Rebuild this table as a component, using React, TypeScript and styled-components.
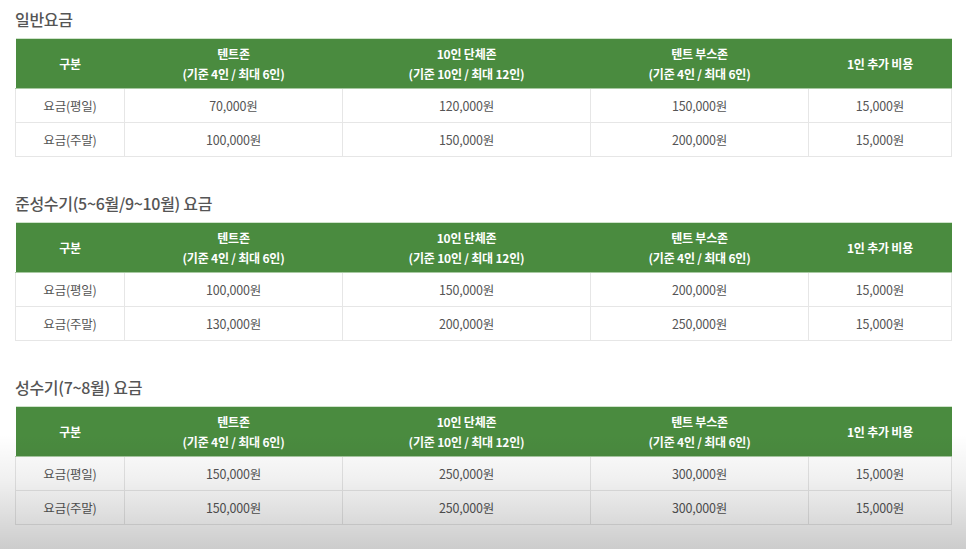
import styled, { createGlobalStyle } from "styled-components";

const GlobalStyle = createGlobalStyle`
  html, body {
    margin: 0;
    padding: 0;
    background: #ffffff;
  }
  body {
    font-family: "Noto Sans CJK KR", "Noto Sans", sans-serif;
  }
`;

const Page = styled.div`
  width: 966px;
  height: 549px;
  overflow: hidden;
  position: relative;
  padding: 8px 15px 0 15px;
  box-sizing: border-box;
`;

const Section = styled.section`
  margin-bottom: 35px;
`;

const Title = styled.h3`
  margin: 0 0 8px 0;
  font-size: 16px;
  font-weight: 500;
  line-height: 22px;
  color: #555;
  letter-spacing: -0.3px;
`;

const Table = styled.table`
  width: 936px;
  border-collapse: collapse;
  table-layout: fixed;
  font-size: 12.5px;
  border-top: 1px solid #cfe3cb;
`;

const Th = styled.th`
  background: #4a8b3f;
  color: #fff;
  font-weight: 700;
  font-size: 12px;
  height: 49px;
  padding: 0;
  line-height: 20px;
  text-align: center;
  letter-spacing: -0.2px;
  border-bottom: 1px solid #a8c9a2;
`;

const Td = styled.td`
  height: 33px;
  padding: 0;
  text-align: center;
  color: #555;
  border: 1px solid #e6e6e6;
  letter-spacing: -0.2px;
`;

const Shade = styled.div`
  position: absolute;
  left: 0;
  right: 0;
  bottom: 0;
  height: 115px;
  pointer-events: none;
  background: linear-gradient(
    to bottom,
    rgba(0, 0, 0, 0) 0%,
    rgba(0, 0, 0, 0.06) 40%,
    rgba(0, 0, 0, 0.2) 100%
  );
`;

const widths = [109, 218, 248, 218, 143];

const headers = [
  ["구분"],
  ["텐트존", "(기준 4인 / 최대 6인)"],
  ["10인 단체존", "(기준 10인 / 최대 12인)"],
  ["텐트 부스존", "(기준 4인 / 최대 6인)"],
  ["1인 추가 비용"],
];

interface IPriceTable {
  title: string;
  weekday: string[];
  weekend: string[];
}

const tables: IPriceTable[] = [
  {
    title: "일반요금",
    weekday: ["70,000원", "120,000원", "150,000원", "15,000원"],
    weekend: ["100,000원", "150,000원", "200,000원", "15,000원"],
  },
  {
    title: "준성수기(5~6월/9~10월) 요금",
    weekday: ["100,000원", "150,000원", "200,000원", "15,000원"],
    weekend: ["130,000원", "200,000원", "250,000원", "15,000원"],
  },
  {
    title: "성수기(7~8월) 요금",
    weekday: ["150,000원", "250,000원", "300,000원", "15,000원"],
    weekend: ["150,000원", "250,000원", "300,000원", "15,000원"],
  },
];

const App = () => {
  return (
    <Page>
      <GlobalStyle />
      {tables.map((t) => (
        <Section key={t.title}>
          <Title>{t.title}</Title>
          <Table>
            <colgroup>
              {widths.map((w, i) => (
                <col key={i} style={{ width: w }} />
              ))}
            </colgroup>
            <thead>
              <tr>
                {headers.map((h, i) => (
                  <Th key={i}>
                    {h.map((line, j) => (
                      <div key={j}>{line}</div>
                    ))}
                  </Th>
                ))}
              </tr>
            </thead>
            <tbody>
              <tr>
                <Td>요금(평일)</Td>
                {t.weekday.map((v, i) => (
                  <Td key={i}>{v}</Td>
                ))}
              </tr>
              <tr>
                <Td>요금(주말)</Td>
                {t.weekend.map((v, i) => (
                  <Td key={i}>{v}</Td>
                ))}
              </tr>
            </tbody>
          </Table>
        </Section>
      ))}
      <Shade />
    </Page>
  );
};

export default App;
